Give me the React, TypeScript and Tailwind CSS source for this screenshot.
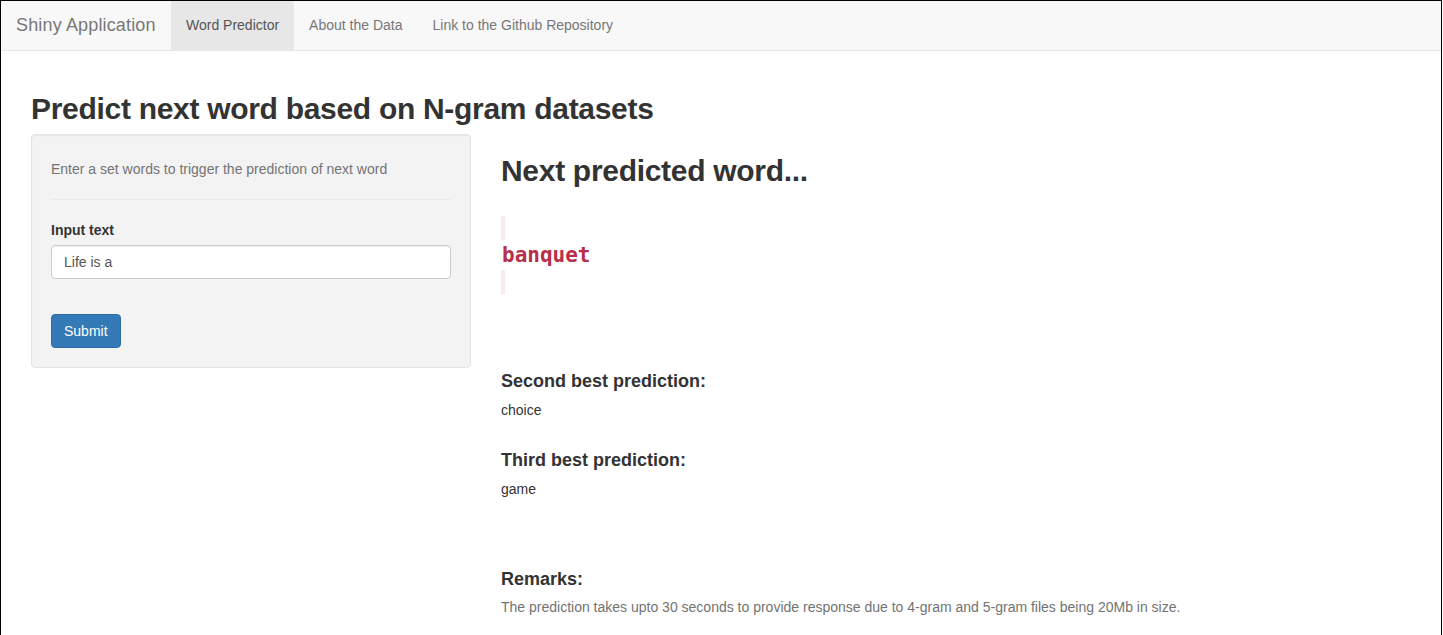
import { useState } from 'react';

const tabs = ['Word Predictor', 'About the Data', 'Link to the Github Repository'];

function NavBar() {
    const [active, setActive] = useState('Word Predictor');

    return (
        <div className="flex h-[50px] items-stretch border-b border-[#e7e7e7] bg-[#f8f8f8]">
            <div className="flex w-[170px] items-center px-[15px] text-[18px] tracking-[0.15px] text-[#777]">Shiny Application</div>
            {tabs.map(tab => (
                <button
                    key={tab}
                    onClick={() => setActive(tab)}
                    className={`flex items-center px-[15px] text-[14px] ${active === tab ? 'bg-[#e7e7e7] text-[#555]' : 'text-[#777]'}`}
                >
                    {tab}
                </button>
            ))}
        </div>
    );
}

function InputPanel() {
    const [text, setText] = useState('Life is a');

    return (
        <div className="w-[440px] rounded-[4px] border border-[#e3e3e3] bg-[#f3f3f3] px-[19px] pt-[19px] pb-[19px] shadow-[inset_0_1px_1px_rgba(0,0,0,0.05)]">
            <div className="mt-[5px] mb-[10px] text-[14px] leading-5 text-[#737373]">
                Enter a set words to trigger the prediction of next word
            </div>
            <hr className="my-5 border-t border-[#eaeaea]" />
            <label className="mb-[5px] block text-[14px] leading-5 font-bold text-[#333]">Input text</label>
            <input
                value={text}
                onChange={e => setText(e.target.value)}
                className="h-[34px] w-full rounded-[4px] border border-[#ccc] bg-white px-3 text-[14px] text-[#555] outline-none shadow-[inset_0_1px_1px_rgba(0,0,0,0.075)]"
            />
            <button className="mt-[35px] h-[34px] rounded-[4px] border border-[#2e6da4] bg-[#337ab7] px-3 text-[14px] text-white">
                Submit
            </button>
        </div>
    );
}

function Predictions() {
    return (
        <div className="flex-1 pl-[30px]">
            <h2 className="mt-5 text-[30px] leading-[33px] font-bold tracking-[-0.3px] text-[#333]">Next predicted word...</h2>
            <div className="mt-[29px] flex h-[78px] flex-col">
                <div className="h-[24px] w-[4px] bg-[#f6ecee]" />
                <div className="h-[30px] pl-[1px] font-['DejaVu_Sans_Mono',monospace] text-[21px] leading-[30px] font-bold text-[#b92e4b]">
                    banquet
                </div>
                <div className="h-[24px] w-[4px] bg-[#f6ecee]" />
            </div>
            <h4 className="mt-[77px] text-[18px] leading-5 font-bold text-[#333]">Second best prediction:</h4>
            <div className="mt-[9px] text-[14px] leading-5 text-[#333]">choice</div>
            <h4 className="mt-[30px] text-[18px] leading-5 font-bold text-[#333]">Third best prediction:</h4>
            <div className="mt-[9px] text-[14px] leading-5 text-[#333]">game</div>
            <h4 className="mt-[70px] text-[18px] leading-5 font-bold text-[#333]">Remarks:</h4>
            <div className="mt-[8px] text-[14px] leading-5 text-[#737373]">
                The prediction takes upto 30 seconds to provide response due to 4-gram and 5-gram files being 20Mb in size.
            </div>
        </div>
    );
}

export default function App() {
    return (
        <div className="h-[635px] w-[1443px] overflow-hidden bg-white font-['Liberation_Sans',Arial,sans-serif]">
            <div className="h-full w-[1442px] border-x border-t border-black">
                <NavBar />
                <div className="px-[30px]">
                    <h1 className="mt-[41px] mb-[9px] text-[30px] leading-[33px] font-bold tracking-[-0.3px] text-[#333]">
                        Predict next word based on N-gram datasets
                    </h1>
                    <div className="flex items-start">
                        <InputPanel />
                        <Predictions />
                    </div>
                </div>
            </div>
        </div>
    );
}
